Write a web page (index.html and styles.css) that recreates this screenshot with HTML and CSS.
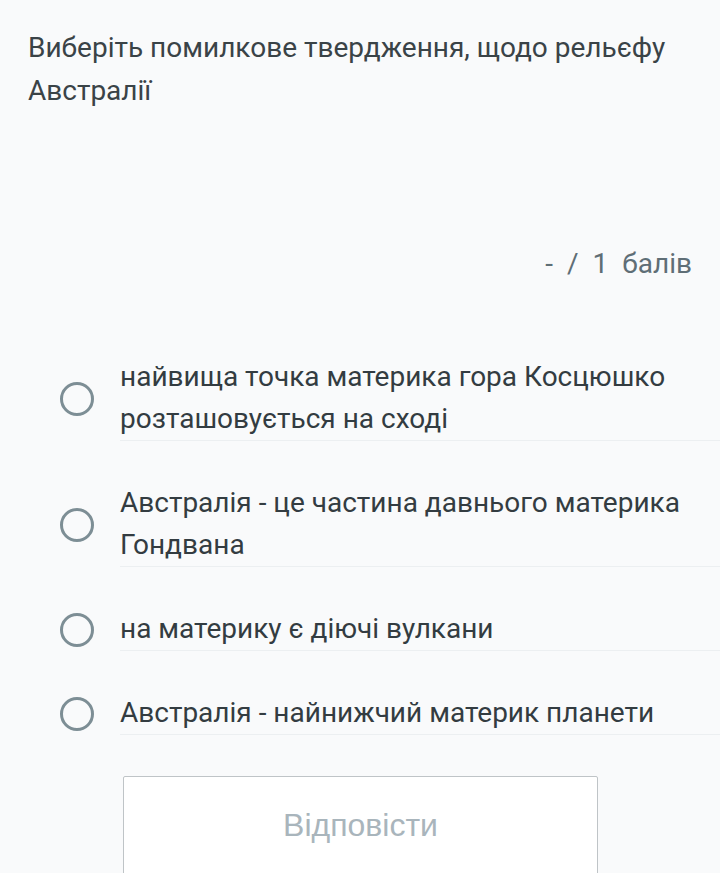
FILE: index.html
```html
<!DOCTYPE html>
<html lang="uk">
<head>
<meta charset="utf-8">
<link rel="stylesheet" href="styles.css">
</head>
<body>
<main class="page">
  <p class="question">Виберіть помилкове твердження, щодо рельєфу Австралії</p>
  <div class="score"><span>-</span><span>/</span><span>1</span><span>балів</span></div>
  <ul class="options">
    <li class="option"><span class="radio"></span><span class="label">найвища точка материка гора Косцюшко розташовується на сході</span></li>
    <li class="option"><span class="radio"></span><span class="label">Австралія - це частина давнього материка Гондвана</span></li>
    <li class="option"><span class="radio"></span><span class="label">на материку є діючі вулкани</span></li>
    <li class="option"><span class="radio"></span><span class="label">Австралія - найнижчий материк планети</span></li>
  </ul>
  <div class="actions"><button class="answer" type="button">Відповісти</button></div>
</main>
</body>
</html>
```
FILE: styles.css
```css
html, body {
  margin: 0;
  padding: 0;
  background: #f9fafb;
}
body {
  font-family: Roboto, "Noto Sans", sans-serif;
  color: #3a4347;
  overflow: hidden;
}
.page {
  padding-top: 26px;
}
.question {
  margin: 0;
  padding: 0 28px;
  font-size: 28px;
  line-height: 43px;
  color: #3a4347;
}
.score {
  margin-top: 131px;
  padding-right: 28px;
  display: flex;
  justify-content: flex-end;
  gap: 14px;
  font-size: 28px;
  line-height: 42px;
  color: #5f6e76;
}
.options {
  list-style: none;
  margin: 71px 0 0;
  padding: 0;
  display: flex;
  flex-direction: column;
  gap: 41px;
}
.option {
  display: flex;
  align-items: center;
  padding-left: 60px;
  gap: 26px;
}
.radio {
  flex: 0 0 auto;
  width: 34px;
  height: 34px;
  box-sizing: border-box;
  border: 3.5px solid #7d8e95;
  border-radius: 50%;
}
.label {
  flex: 1;
  font-size: 28px;
  line-height: 42px;
  color: #333c41;
  border-bottom: 1px solid #eceff1;
}
.actions {
  margin-top: 41px;
  padding-left: 123px;
}
.answer {
  width: 475px;
  height: 120px;
  box-sizing: border-box;
  background: #ffffff;
  border: 1px solid #bfc4c7;
  border-radius: 2px;
  font-family: "Liberation Sans", Arial, sans-serif;
  font-size: 32px;
  color: #a9b5bc;
  padding: 0 0 23px;
  line-height: 1;
}
```
